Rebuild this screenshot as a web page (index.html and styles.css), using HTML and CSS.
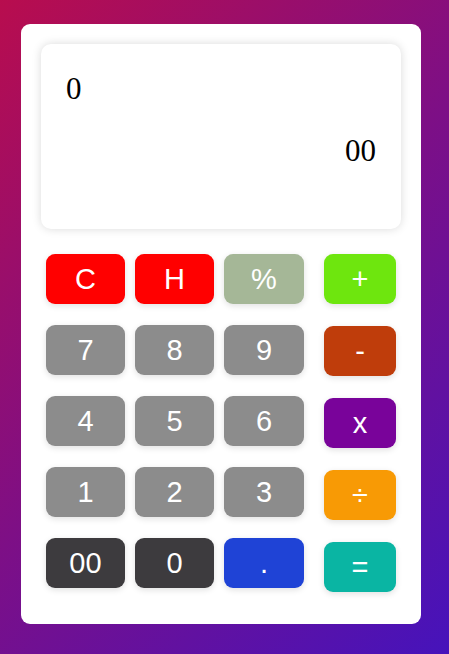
FILE: index.html
```html
<!DOCTYPE html>
<html>
<head>
<meta charset="utf-8">
<link rel="stylesheet" href="styles.css">
</head>
<body>
<div class="calc">
  <div class="display">
    <div class="expr">0</div>
    <div class="result">00</div>
  </div>
  <div class="pad">
    <div class="keys">
      <button class="key red">C</button>
      <button class="key red">H</button>
      <button class="key sage">%</button>
      <button class="key gray">7</button>
      <button class="key gray">8</button>
      <button class="key gray">9</button>
      <button class="key gray">4</button>
      <button class="key gray">5</button>
      <button class="key gray">6</button>
      <button class="key gray">1</button>
      <button class="key gray">2</button>
      <button class="key gray">3</button>
      <button class="key dark">00</button>
      <button class="key dark">0</button>
      <button class="key blue">.</button>
    </div>
    <div class="ops">
      <button class="key op green">+</button>
      <button class="key op rust">-</button>
      <button class="key op purple">x</button>
      <button class="key op orange">÷</button>
      <button class="key op teal">=</button>
    </div>
  </div>
</div>
</body>
</html>
```
FILE: styles.css
```css
html, body {
  margin: 0;
  padding: 0;
}
body {
  width: 449px;
  height: 654px;
  background: linear-gradient(135deg, #b80d4e 0%, #7d0f86 50%, #4613bb 100%);
  font-family: "Liberation Sans", Arial, sans-serif;
  overflow: hidden;
}
.calc {
  box-sizing: border-box;
  width: 400px;
  height: 600px;
  margin: 24px 0 0 21px;
  background: #fff;
  border-radius: 9px;
  padding: 20px;
}
.display {
  box-sizing: border-box;
  height: 185px;
  border-radius: 10px;
  background: #fff;
  box-shadow: 0 0 10px rgba(0, 0, 0, 0.15);
  padding: 27px 25px 24px;
  font-family: "Liberation Serif", "Times New Roman", serif;
  font-size: 31px;
  color: #000;
  display: flex;
  flex-direction: column;
}
.expr {
  line-height: 36px;
}
.result {
  text-align: right;
  line-height: 36px;
  margin-top: 26px;
}
.pad {
  display: flex;
  margin-top: 25px;
  padding-left: 5px;
}
.keys {
  display: grid;
  grid-template-columns: 79px 79px 80px;
  grid-auto-rows: 50px;
  column-gap: 10px;
  row-gap: 21px;
}
.ops {
  display: flex;
  flex-direction: column;
  gap: 22px;
  margin-left: 20px;
}
.key {
  border: none;
  border-radius: 9px;
  color: #fff;
  font-family: "Liberation Sans", Arial, sans-serif;
  font-size: 29px;
  padding: 0;
  box-shadow: 0 2px 6px rgba(0, 0, 0, 0.12);
  display: flex;
  align-items: center;
  justify-content: center;
}
.op {
  width: 72px;
  height: 50px;
}
.red { background: #ff0000; }
.sage { background: #a5b797; }
.gray { background: #8c8c8c; }
.dark { background: #3d3b3e; }
.blue { background: #1f43d6; }
.green { background: #6ee60e; }
.rust { background: #bf3d0b; }
.purple { background: #79039a; }
.orange { background: #f89a05; }
.teal { background: #0ab5a3; }
```
